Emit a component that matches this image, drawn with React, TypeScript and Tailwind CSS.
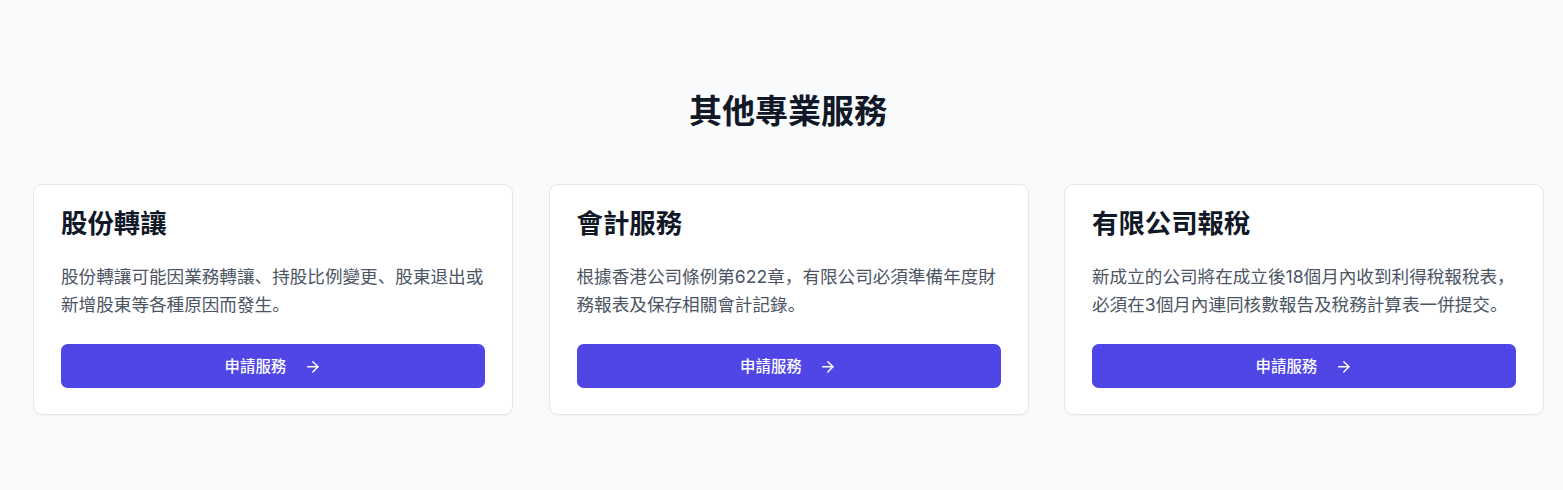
import React from "react";
import { ArrowRight } from "lucide-react";

const cards = [
  {
    title: "股份轉讓",
    desc: "股份轉讓可能因業務轉讓、持股比例變更、股東退出或新增股東等各種原因而發生。",
  },
  {
    title: "會計服務",
    desc: "根據香港公司條例第622章，有限公司必須準備年度財務報表及保存相關會計記錄。",
  },
  {
    title: "有限公司報稅",
    desc: "新成立的公司將在成立後18個月內收到利得稅報稅表，必須在3個月內連同核數報告及稅務計算表一併提交。",
  },
];

export default function App() {
  return (
    <div
      className="min-h-[490px] w-full bg-[#f9fafb] pt-[91px] pb-[76px] pl-[33px] pr-[20px]"
      style={{ fontFamily: '"Inter", "Noto Sans CJK SC", "Noto Sans", sans-serif' }}
    >
      <h2 className="text-center text-[33px] leading-[40px] font-bold text-[#111827]">
        其他專業服務
      </h2>
      <div className="mt-[53px] grid grid-cols-[480px_480px_480px] gap-x-[35.5px]">
        {cards.map((c) => (
          <div
            key={c.title}
            className="rounded-[9px] border border-[#e5e7eb] bg-white px-[27px] pt-[26.4px] pb-[26px] shadow-[0_1px_2px_rgba(0,0,0,0.04)]"
          >
            <h3 className="text-[26.4px] leading-[24px] font-bold text-[#111827]">{c.title}</h3>
            <p className="mt-[28px] text-[17.6px] leading-[27.5px] text-[#4b5563]">{c.desc}</p>
            <button className="mt-[26px] flex h-[44px] w-full items-center justify-center gap-[17.6px] rounded-[6.6px] bg-[#4f46e5] text-[15.4px] font-medium text-white">
              <span>申請服務</span>
              <ArrowRight size={17.6} strokeWidth={2} />
            </button>
          </div>
        ))}
      </div>
    </div>
  );
}
